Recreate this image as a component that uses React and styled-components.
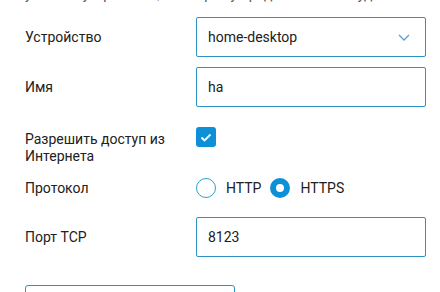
import { useState } from "react";
import styled, { createGlobalStyle } from "styled-components";

const Global = createGlobalStyle`
  html, body {
    margin: 0;
    padding: 0;
    background: #fff;
    overflow: hidden;
  }
  body {
    font-family: Roboto, "Liberation Sans", Arial, sans-serif;
    color: #212121;
  }
`;

const Form = styled.div`
  width: 401px;
  padding-left: 25px;
  display: flex;
  flex-direction: column;
`;

const Intro = styled.p`
  margin: -14px 0 0;
  font-size: 14px;
  line-height: 17px;
  color: #555;
  white-space: nowrap;
  overflow: hidden;
`;

const Row = styled.div`
  display: grid;
  grid-template-columns: 171px 230px;
  align-items: ${(p) => (p.$top ? "start" : "center")};
  min-height: ${(p) => p.$h}px;
  margin-top: ${(p) => p.$mt}px;
`;

const Label = styled.div`
  font-size: 14px;
  line-height: 17px;
  padding-top: ${(p) => p.$pt || 0}px;
  width: 150px;
`;

const Field = styled.div`
  position: relative;
  height: 40px;
  box-sizing: border-box;
  border: 1px solid #2e93c3;
  border-radius: 2px;
  display: flex;
  align-items: center;
  padding: 0 11px;
  font-size: 14px;
`;

const Input = styled.input`
  border: 0;
  outline: 0;
  padding: 0;
  width: 100%;
  font: inherit;
  color: #212121;
  background: transparent;
`;

const Chevron = styled.svg`
  position: absolute;
  right: 15px;
  top: 16px;
`;

const CheckBox = styled.div`
  width: 20px;
  height: 20px;
  margin-top: 10px;
  border-radius: 3px;
  background: #0e90d8;
  display: flex;
  align-items: center;
  justify-content: center;
`;

const Radios = styled.div`
  display: flex;
  align-items: center;
  font-size: 14px;
`;

const Radio = styled.span`
  width: 20px;
  height: 20px;
  box-sizing: border-box;
  border-radius: 50%;
  border: ${(p) => (p.$on ? "6.5px solid #0e90d8" : "1.5px solid #2ea0cf")};
  background: #fff;
  margin-right: 10px;
`;

const RadioText = styled.span`
  margin-right: 9px;
`;

const Button = styled.div`
  margin-top: 28px;
  width: 210px;
  height: 40px;
  box-sizing: border-box;
  border: 1px solid #2e93c3;
  border-radius: 3px;
`;

export default function App() {
  const [name, setName] = useState("ha");
  const [port, setPort] = useState("8123");
  return (
    <>
      <Global />
      <Form>
        <Intro>укажите устройство, к которому предоставляется удалённый доступ через порт роутера</Intro>
        <Row $h={40} $mt={14}>
          <Label>Устройство</Label>
          <Field>
            home-desktop
            <Chevron width="12" height="7" viewBox="0 0 12 7">
              <path d="M1 1l5 5 5-5" fill="none" stroke="#5b9fd2" strokeWidth="1.3" />
            </Chevron>
          </Field>
        </Row>
        <Row $h={40} $mt={10}>
          <Label>Имя</Label>
          <Field>
            <Input value={name} onChange={(e) => setName(e.target.value)} />
          </Field>
        </Row>
        <Row $h={51} $mt={10} $top>
          <Label $pt={14}>Разрешить доступ из Интернета</Label>
          <CheckBox>
            <svg width="12" height="9" viewBox="0 0 12 9">
              <path d="M1.5 4.5l3 3 6-6" fill="none" stroke="#fff" strokeWidth="1.8" />
            </svg>
          </CheckBox>
        </Row>
        <Row $h={20} $mt={10}>
          <Label>Протокол</Label>
          <Radios>
            <Radio />
            <RadioText>HTTP</RadioText>
            <Radio $on />
            <RadioText>HTTPS</RadioText>
          </Radios>
        </Row>
        <Row $h={40} $mt={19}>
          <Label>Порт TCP</Label>
          <Field>
            <Input value={port} onChange={(e) => setPort(e.target.value)} />
          </Field>
        </Row>
        <Button />
      </Form>
    </>
  );
}
